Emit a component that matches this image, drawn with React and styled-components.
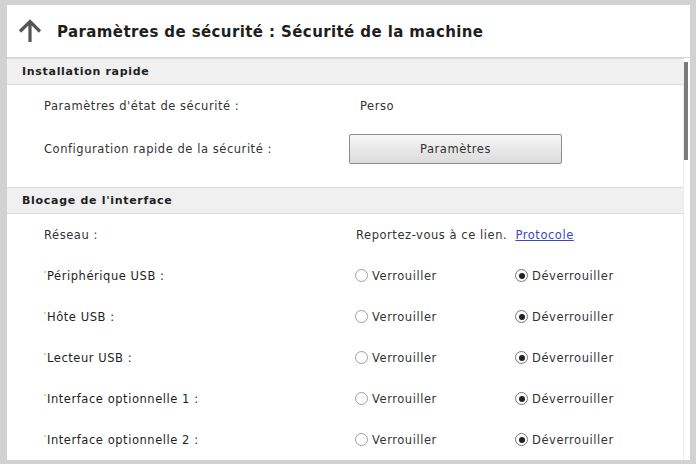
import React from "react";
import styled, { createGlobalStyle } from "styled-components";

const rows = [
  { label: "Périphérique USB :", value: "unlock" },
  { label: "Hôte USB :", value: "unlock" },
  { label: "Lecteur USB :", value: "unlock" },
  { label: "Interface optionnelle 1 :", value: "unlock" },
  { label: "Interface optionnelle 2 :", value: "unlock" },
];

const ArrowUp = () => (
  <svg width="26" height="26" viewBox="0 0 26 26">
    <path
      d="M13 24V4M3 13.5L13 3.5l10 10"
      fill="none"
      stroke="#555"
      strokeWidth="3.2"
      strokeLinecap="butt"
    />
  </svg>
);

const App = () => {
  return (
    <Frame>
      <GlobalStyle />
      <Panel>
        <TitleBar>
          <ArrowUp />
          <Title>Paramètres de sécurité : Sécurité de la machine</Title>
        </TitleBar>
        <ScrollArea>
          <Content>
            <SectionHeader>Installation rapide</SectionHeader>
            <Row height={42}>
              <Label>Paramètres d'état de sécurité :</Label>
              <Value>Perso</Value>
            </Row>
            <Row height={44}>
              <Label>Configuration rapide de la sécurité :</Label>
              <SettingsButton>Paramètres</SettingsButton>
            </Row>
            <Spacer />
            <SectionHeader>Blocage de l'interface</SectionHeader>
            <Row height={41}>
              <Label>Réseau :</Label>
              <Value offset={8}>
                Reportez-vous à ce lien. <Link href="#">Protocole</Link>
              </Value>
            </Row>
            {rows.map((r) => (
              <Row key={r.label} height={41}>
                <Label required>{r.label}</Label>
                <Radios>
                  <RadioItem>
                    <Radio checked={r.value === "lock"} />
                    Verrouiller
                  </RadioItem>
                  <RadioItem>
                    <Radio checked={r.value === "unlock"} />
                    Déverrouiller
                  </RadioItem>
                </Radios>
              </Row>
            ))}
          </Content>
          <ScrollTrack>
            <ScrollThumb />
          </ScrollTrack>
        </ScrollArea>
      </Panel>
    </Frame>
  );
};

export default App;

const GlobalStyle = createGlobalStyle`
  html, body {
    margin: 0;
    padding: 0;
    background: #d2d2d2;
  }
  body {
    font-family: "DejaVu Sans", "Liberation Sans", Arial, sans-serif;
  }
`;

const Frame = styled.div`
  width: 696px;
  height: 464px;
  box-sizing: border-box;
  padding: 5px 6px 4px 7px;
  background: #d2d2d2;
`;

const Panel = styled.div`
  height: 100%;
  display: flex;
  flex-direction: column;
  background: #ffffff;
  overflow: hidden;
`;

const TitleBar = styled.div`
  height: 53px;
  flex: none;
  display: flex;
  align-items: center;
  gap: 14px;
  padding-left: 10px;
  border-bottom: 1px solid #d6d6d6;
  box-sizing: border-box;
`;

const Title = styled.div`
  font-size: 15px;
  font-weight: 700;
  letter-spacing: 0.4px;
  color: #1e1e1e;
  padding-top: 2px;
`;

const ScrollArea = styled.div`
  flex: 1;
  display: flex;
  min-height: 0;
`;

const Content = styled.div`
  flex: 1;
  display: flex;
  flex-direction: column;
`;

const SectionHeader = styled.div`
  height: 27px;
  flex: none;
  box-sizing: border-box;
  display: flex;
  align-items: center;
  padding-left: 15px;
  background: #f0f0f0;
  border-top: 1px solid #dcdcdc;
  border-bottom: 1px solid #dcdcdc;
  font-size: 11px;
  font-weight: 700;
  letter-spacing: 0.7px;
  color: #222;
`;

const Spacer = styled.div`
  height: 16px;
  flex: none;
`;

const Row = styled.div`
  height: ${(p) => p.height}px;
  flex: none;
  display: flex;
  align-items: center;
  padding-left: 37px;
  font-size: 11.5px;
  letter-spacing: 0.55px;
  color: #333;
`;

const Label = styled.div`
  width: 304px;
  flex: none;
  position: relative;
  padding-left: ${(p) => (p.required ? "3px" : "0")};
  color: ${(p) => (p.required ? "#1e1e1e" : "#333")};

  &::before {
    content: "";
    display: ${(p) => (p.required ? "block" : "none")};
    position: absolute;
    left: 0;
    top: 2px;
    width: 2px;
    height: 2px;
    border-radius: 50%;
    background: #cfc77a;
  }
`;

const Value = styled.div`
  color: #333;
  padding-left: ${(p) => p.offset ?? 12}px;
`;

const Link = styled.a`
  color: #3a46c8;
  margin-left: 4px;
`;

const SettingsButton = styled.button`
  width: 213px;
  height: 30px;
  margin-left: 1px;
  border: 1px solid #8c8c8c;
  border-radius: 2px;
  background: linear-gradient(#f6f6f6, #dcdcdc);
  font-family: inherit;
  font-size: 11.5px;
  letter-spacing: 0.55px;
  color: #333;
`;

const Radios = styled.div`
  display: flex;
  padding-left: 4px;
`;

const RadioItem = styled.label`
  width: 160px;
  display: flex;
  align-items: center;
  gap: 4px;
  color: #333;
`;

const Radio = styled.span`
  width: 13px;
  height: 13px;
  border-radius: 50%;
  border: 1px solid ${(p) => (p.checked ? "#777" : "#a0a0a0")};
  box-sizing: border-box;
  display: inline-flex;
  align-items: center;
  justify-content: center;
  background: #fff;

  &::after {
    content: "";
    width: 6px;
    height: 6px;
    border-radius: 50%;
    background: ${(p) => (p.checked ? "#222" : "transparent")};
  }
`;

const ScrollTrack = styled.div`
  width: 6px;
  flex: none;
  padding-top: 4px;
  border-left: 1px solid #ececec;
`;

const ScrollThumb = styled.div`
  width: 4px;
  height: 98px;
  background: #7a7a7a;
`;
